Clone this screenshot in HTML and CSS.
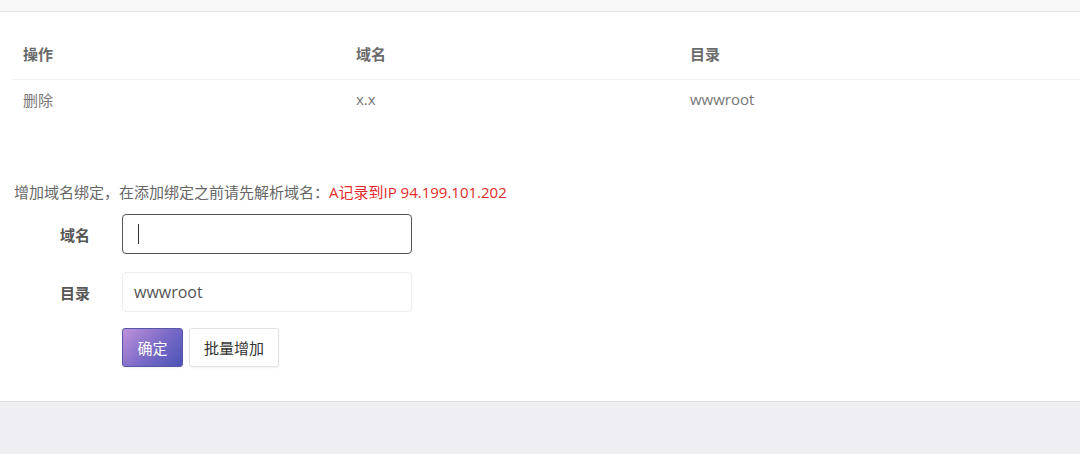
FILE: index.html
```html
<!DOCTYPE html>
<html lang="zh-CN">
<head>
  <meta charset="UTF-8">
  <meta name="viewport" content="width=device-width, initial-scale=1.0">
  <title>域名绑定</title>
  <link rel="stylesheet" href="styles.css">
</head>
<body>
  <div class="page">
    <div class="topbar"></div>

    <div class="domain-table">
      <div class="row head">
        <div class="cell">操作</div>
        <div class="cell">域名</div>
        <div class="cell">目录</div>
      </div>
      <div class="row">
        <div class="cell">删除</div>
        <div class="cell">x.x</div>
        <div class="cell">wwwroot</div>
      </div>
    </div>

    <p class="notice">增加域名绑定，在添加绑定之前请先解析域名：<span class="red">A记录到IP 94.199.101.202</span></p>

    <div class="form">
      <div class="form-row">
        <label class="label">域名</label>
        <div class="field active"><span class="caret"></span></div>
      </div>
      <div class="form-row">
        <label class="label">目录</label>
        <div class="field">wwwroot</div>
      </div>
      <div class="form-row buttons">
        <span class="label"></span>
        <button class="btn primary">确定</button>
        <button class="btn">批量增加</button>
      </div>
    </div>
  </div>
</body>
</html>
```

FILE: styles.css
```css
body {
  margin: 0;
  font-family: "Open Sans", "Noto Sans CJK SC", sans-serif;
  background-color: #efeef3;
  height: 454px;
}

.page {
  background-color: #fff;
  height: 401px;
  border-bottom: 1px solid #dcdcdf;
}

.topbar {
  height: 11px;
  background-color: #f8f8f8;
  border-bottom: 1px solid #e6e6e6;
}

.domain-table {
  margin-left: 13px;
  padding-top: 19px;
}

.row {
  display: grid;
  grid-template-columns: 333px 334px 1fr;
  height: 38px;
  align-items: center;
  font-size: 15px;
  color: #777;
}

.row.head {
  height: 48px;
  font-weight: bold;
  color: #6a6a6a;
  border-bottom: 1px solid #f0f0f0;
}

.row.head .cell {
  padding-bottom: 3px;
}

.cell {
  padding-left: 10px;
}

.notice {
  margin: 64px 0 0 14px;
  font-size: 15px;
  line-height: 20px;
  color: #666;
}

.red {
  color: #e42a2a;
}

.form {
  margin-top: 12px;
  display: flex;
  flex-direction: column;
  gap: 18px;
}

.form-row {
  display: flex;
  align-items: center;
  gap: 32px;
}

.form-row.buttons {
  margin-top: -2px;
  gap: 6px;
}

.label {
  width: 76px;
  margin-left: 14px;
  text-align: right;
  font-size: 15px;
  font-weight: bold;
  color: #555;
}

.buttons .label {
  margin-right: 26px;
}

.field {
  width: 277px;
  height: 38px;
  border: 1px solid #ececec;
  border-radius: 4px;
  background-color: #fff;
  display: flex;
  align-items: center;
  padding-left: 11px;
  font-size: 16px;
  color: #555;
}

.field.active {
  border-color: #555;
}

.caret {
  width: 1px;
  height: 20px;
  margin-left: 4px;
  background-color: #333;
}

.btn {
  height: 39px;
  padding: 0 14px;
  font-family: inherit;
  font-size: 15px;
  color: #333;
  background-color: #fff;
  border: 1px solid #e2e2e2;
  border-radius: 3px;
  box-shadow: 0 1px 2px rgba(0, 0, 0, 0.06);
}

.btn.primary {
  width: 61px;
  padding: 0;
  color: #fff;
  border-color: #5556a8;
  background-image: linear-gradient(135deg, #c092da 0%, #7d6cc8 50%, #4a53b6 100%);
}
```
